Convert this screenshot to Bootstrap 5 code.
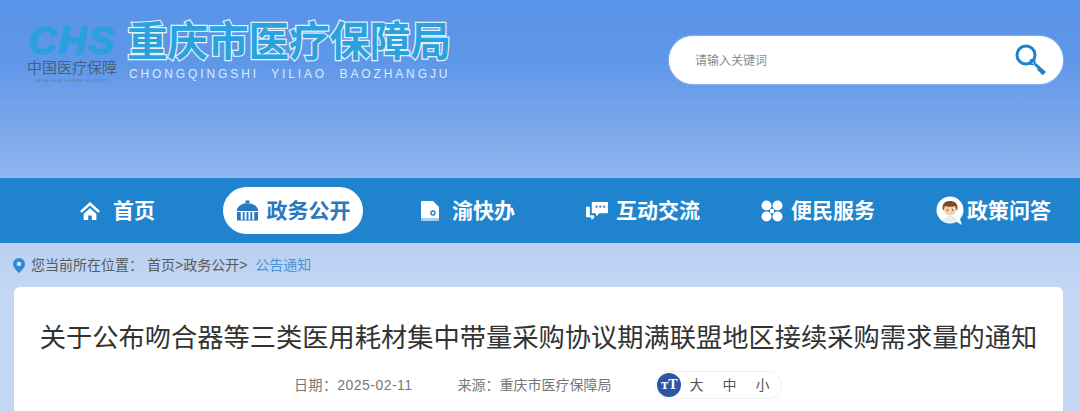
<!DOCTYPE html>
<html lang="zh">
<head>
  <meta charset="UTF-8">
  <title>重庆市医疗保障局</title>
  <link href="https://cdn.jsdelivr.net/npm/bootstrap@5.3.3/dist/css/bootstrap.min.css" rel="stylesheet">
  <style>
    html, body { height: 411px; overflow: hidden; }
    body { font-family: "Liberation Sans", "Noto Sans CJK SC", sans-serif; background: #c3d7f4; }
    .top-head { height: 178px; background: linear-gradient(180deg, #5a94e8 0%, #5f97e8 35%, #7ea9ec 75%, #93b7ef 100%); padding: 0 17px 0 27px; }
    .logo-mark { width: 90px; margin-top: 24px; }
    .chs { font: italic 700 39px/34px "Liberation Sans", sans-serif; color: #2aa0dc; -webkit-text-stroke: 1.4px #2aa0dc; letter-spacing: 1.5px; height: 34px; white-space: nowrap; }
    .logo-sub { font-size: 15px; line-height: 18px; color: #46627e; white-space: nowrap; margin-top: 1px; }
    .logo-en { font-size: 4px; line-height: 4px; color: #5b7897; letter-spacing: .6px; white-space: nowrap; margin-top: 2px; }
    .name-wrap { margin-left: 10px; margin-top: 20px; }
    .site-name { font-size: 40.5px; line-height: 44px; font-weight: 700; color: #2ba2dd; -webkit-text-stroke: 2.5px #e2f1fb; paint-order: stroke fill; white-space: nowrap; }
    .site-pin { font-size: 12px; line-height: 14px; color: #dcebfb; letter-spacing: 2.88px; margin-left: 2px; margin-top: 3px; white-space: pre; }
    .search-box { width: 394px; height: 48px; background: #fff; border-radius: 24px; margin-top: 36px; padding: 0 16px 0 26px; box-shadow: 0 0 2px rgba(255,255,255,.8); }
    .search-hint { font-size: 12px; color: #8a8a8a; padding-top: 1px; }
    .main-nav { height: 65px; background: #1f84cd; padding-left: 79px; }
    .nav-cell { color: #fff; font-size: 21px; font-weight: 700; line-height: 1; white-space: nowrap; }
    .nav-cell svg { flex: none; }
    .nav-on { background: #fff; color: #2a78c0; height: 47px; width: 140px; border-radius: 24px; justify-content: center; margin-left: 68px; }
    .nav-ban { margin-left: 57px; gap: 12px; }
    .nav-talk { margin-left: 71px; }
    .nav-serv { margin-left: 61px; }
    .nav-ask { margin-left: 61px; gap: 3px; }
    .nav-home { gap: 12px; }
    .crumb-row { height: 44px; background: linear-gradient(180deg, #b9d0f2, #c3d7f4); padding-left: 13px; font-size: 14px; color: #5a5a5a; }
    .crumb-here { margin-left: 6px; }
    .crumb-now { color: #4a93d6; }
    .article-box { margin: 0 17px 0 14px; height: 140px; background: #fff; border-radius: 6px 6px 0 0; }
    .article-title { font-size: 26.25px; line-height: 40px; color: #333; text-align: center; padding-top: 31px; margin: 0; font-weight: 400; white-space: nowrap; }
    .meta-row { font-size: 14px; color: #777; margin-top: 13px; padding-left: 280px; }
    .meta-date { letter-spacing: .45px; }
    .meta-from { margin-left: 45px; }
    .size-pill { height: 28px; width: 127px; border: 1px solid #eef1f6; border-radius: 14px; padding-left: 1px; color: #555; margin-left: 44px; }
    .size-ico { width: 24px; height: 24px; border-radius: 50%; background: #2f55a4; color: #fff; font: 700 14px/24px "Liberation Serif", serif; text-align: center; margin-right: 8px; }
    .size-opt + .size-opt { margin-left: 19px; }
  </style>
</head>
<body>

  <header class="top-head d-flex justify-content-between align-items-start">
    <div class="d-flex">
      <div class="logo-mark text-center">
        <div class="chs">CHS</div>
        <div class="logo-sub">中国医疗保障</div>
        <div class="logo-en">CHINA HEALTHCARE SECURITY</div>
      </div>
      <div class="name-wrap">
        <div class="site-name">重庆市医疗保障局</div>
        <div class="site-pin">CHONGQINGSHI  YILIAO  BAOZHANGJU</div>
      </div>
    </div>
    <div class="search-box d-flex align-items-center justify-content-between">
      <span class="search-hint">请输入关键词</span>
      <svg width="32" height="32" viewBox="0 0 32 32">
        <circle cx="11" cy="11" r="9" fill="none" stroke="#1f84cd" stroke-width="3"/>
        <circle cx="17.5" cy="18" r="2.4" fill="none" stroke="#1f84cd" stroke-width="1.5"/>
        <path d="M19 21l2-2 10 9-3 3-2-1-1-2-2-1-1-3z" fill="#1f84cd"/>
      </svg>
    </div>
  </header>

  <nav class="main-nav d-flex align-items-center">
    <a class="nav-cell nav-home d-flex align-items-center text-decoration-none">
      <svg width="22" height="20" viewBox="0 0 24 22" fill="#fff"><path d="M12 1L1 11l2 2 9-8 9 8 2-2z"/><path d="M5 14l7-6 7 6v7h-5v-5h-4v5H5z"/></svg>
      首页
    </a>
    <a class="nav-cell nav-on d-flex align-items-center gap-2 text-decoration-none">
      <svg width="23" height="22" viewBox="0 0 24 22" fill="#2a78c0"><rect x="10" y="0" width="4" height="3"/><path d="M1 9c2-4 6-6 11-6s9 2 11 6v2H1z"/><path d="M1 12h4v8h2v-8h2v8h2v-8h2v8h2v-8h2v8h2v-8h4v9H1z"/></svg>
      政务公开
    </a>
    <a class="nav-cell nav-ban d-flex align-items-center text-decoration-none">
      <svg width="20" height="22" viewBox="0 0 20 22"><path d="M2 1a1 1 0 0 0-1 1v16h18V7l-6-6z" fill="#fff"/><path d="M1 18h18v2a1 1 0 0 1-1 1H2a1 1 0 0 1-1-1z" fill="#a9cdec"/><circle cx="13" cy="13" r="2" fill="none" stroke="#1f84cd" stroke-width="1.4"/></svg>
      渝快办
    </a>
    <a class="nav-cell nav-talk d-flex align-items-center gap-2 text-decoration-none">
      <svg width="22" height="19" viewBox="0 0 23 20" fill="#fff"><path d="M6 1h17v12H14l-3 3-1-3H6z"/><path d="M0 6h4v9h4l1 2-3 3-1-3H0z"/><g fill="#1f84cd"><circle cx="11" cy="6" r="1.2"/><circle cx="15" cy="6" r="1.2"/><circle cx="19" cy="6" r="1.2"/></g></svg>
      互动交流
    </a>
    <a class="nav-cell nav-serv d-flex align-items-center gap-2 text-decoration-none">
      <svg width="22" height="22" viewBox="0 0 22 22" fill="#fff"><circle cx="5.5" cy="5.5" r="5"/><circle cx="16.5" cy="5.5" r="5"/><circle cx="5.5" cy="16.5" r="5"/><circle cx="16.5" cy="16.5" r="5"/><path d="M9 9h4v4H9z"/></svg>
      便民服务
    </a>
    <a class="nav-cell nav-ask d-flex align-items-center text-decoration-none">
      <svg width="28" height="30" viewBox="0 0 28 30"><circle cx="14" cy="14" r="13.5" fill="#fff"/><path d="M19 25l7 4-3-9z" fill="#fff"/><circle cx="14" cy="13" r="6.5" fill="#f3cfae"/><path d="M7 15c-2-8 3-10 7-10s9 2 7 10l-2-5c-3 1-7 1-10 0z" fill="#7a4a2a"/><circle cx="11.5" cy="14" r=".8" fill="#5a3a26"/><circle cx="16.5" cy="14" r=".8" fill="#5a3a26"/><path d="M7 25c1-4 4-5 7-5s6 1 7 5c-4 2-10 2-14 0z" fill="#dfeef7"/></svg>
      政策问答
    </a>
  </nav>

  <div class="crumb-row d-flex align-items-center">
    <svg class="flex-shrink-0" width="12" height="15" viewBox="0 0 12 15"><path d="M6 0a6 6 0 0 1 6 6c0 4-6 9-6 9S0 10 0 6a6 6 0 0 1 6-6z" fill="#2b8bd3"/><circle cx="6" cy="6" r="2.3" fill="#d5e4f7"/></svg>
    <span class="crumb-here">您当前所在位置：</span>
    <span class="ms-1">首页&gt;政务公开&gt;</span>
    <span class="crumb-now ms-2">公告通知</span>
  </div>

  <main class="article-box">
    <h1 class="article-title">关于公布吻合器等三类医用耗材集中带量采购协议期满联盟地区接续采购需求量的通知</h1>
    <div class="meta-row d-flex align-items-center">
      <span class="meta-date">日期：2025-02-11</span>
      <span class="meta-from">来源：重庆市医疗保障局</span>
      <div class="size-pill d-flex align-items-center">
        <span class="size-ico">тT</span>
        <span class="size-opt">大</span>
        <span class="size-opt">中</span>
        <span class="size-opt">小</span>
      </div>
    </div>
  </main>

  <script src="https://cdn.jsdelivr.net/npm/bootstrap@5.3.3/dist/js/bootstrap.bundle.min.js"></script>
</body>
</html>
